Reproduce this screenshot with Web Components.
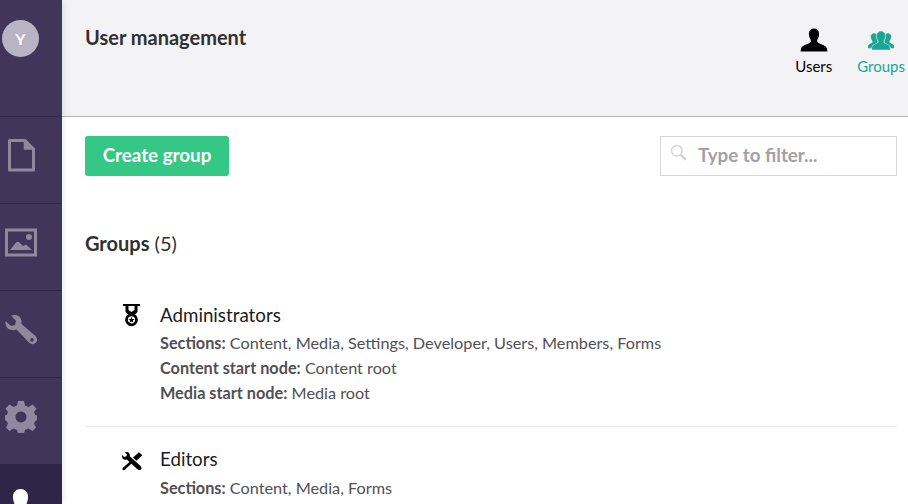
<!DOCTYPE html>
<html lang="en">
  <head>
    <meta charset="UTF-8" />
    <title>User management</title>
    <style>
      html, body { margin: 0; height: 100%; overflow: hidden; background: #fff; }
      body { font-family: Lato, "Open Sans", sans-serif; color: #303033; }
    </style>
  </head>
  <body>
    <template id="app-template">
      <style>
        :host { display: flex; width: 908px; height: 504px; overflow: hidden; }
        main { flex: 1; min-width: 0; display: flex; flex-direction: column; }
      </style>
      <slot name="nav"></slot>
      <main><slot></slot></main>
    </template>

    <template id="nav-template">
      <style>
        :host { display: flex; flex-direction: column; flex: none; position: relative; z-index: 1; width: 62px; height: 504px; background: #413659; box-shadow: 0 0 8px rgba(0, 0, 0, .12); }
        .avatar { flex: none; height: 116px; box-sizing: border-box; padding: 20px 0 0 2px; }
        .circle { width: 37px; height: 37px; border-radius: 50%; background: #b9b4c4; color: #fff; font-size: 16px; font-weight: 700; display: flex; align-items: center; justify-content: center; }
      </style>
      <div class="avatar"><div class="circle">Y</div></div>
      <slot></slot>
    </template>

    <template id="nav-item-template">
      <style>
        :host { display: flex; flex: none; box-sizing: border-box; height: 87px; border-top: 1px solid #322848; padding-top: 20px; padding-left: 3px; width: 62px; overflow: hidden; }
        :host([active]) { background: #2f2547; border-top-color: #2f2547; color: #fff; height: 40px; }
        ::slotted(svg) { display: block; flex: none; }
      </style>
      <slot></slot>
    </template>

    <template id="header-template">
      <style>
        :host { display: flex; justify-content: space-between; flex: none; box-sizing: border-box; height: 117px; background: #f3f3f5; border-bottom: 1px solid #b5b1bf; padding: 25px 3px 0 23px; }
        h1 { margin: 0; font-size: 20px; line-height: 24px; font-weight: 700; color: #303033; }
        .apps { display: flex; gap: 25px; padding-top: 1px; }
      </style>
      <h1><slot name="title"></slot></h1>
      <div class="apps"><slot></slot></div>
    </template>

    <template id="app-tab-template">
      <style>
        :host { display: flex; flex-direction: column; align-items: center; font-size: 15px; line-height: 18px; color: #000; }
        :host([active]) { color: #1aa595; }
        ::slotted(svg) { display: block; margin-bottom: 5px; }
      </style>
      <slot name="icon"></slot>
      <slot></slot>
    </template>

    <template id="toolbar-template">
      <style>
        :host { display: flex; justify-content: space-between; align-items: flex-start; padding: 19px 11px 0 23px; }
        button { font: 700 18.75px/22px Lato, sans-serif; color: #fff; background: #35c786; border: 0; border-radius: 3px; height: 40px; width: 144px; padding: 0 0 2px; }
        .filter { box-sizing: border-box; width: 237px; height: 40px; border: 1px solid #d8d7d9; display: flex; align-items: center; gap: 11px; padding: 0 0 4px 9px; color: #a2a1a6; font-size: 18.75px; font-weight: 700; }
        svg { display: block; margin-top: -4px; }
      </style>
      <button><slot name="action"></slot></button>
      <div class="filter">
        <svg width="17" height="17" viewBox="0 0 18 18" fill="none" stroke="#d4d3d6" stroke-width="1.6">
          <circle cx="7.2" cy="7.2" r="5.6" />
          <path d="M11.5 11.5 L17 16.8" stroke-width="2.6" />
        </svg>
        <slot name="placeholder"></slot>
      </div>
    </template>

    <template id="group-list-template">
      <style>
        :host { display: block; padding: 55px 11px 0 23px; }
        h2 { margin: 0 0 46.5px; font-size: 20px; line-height: 24px; font-weight: 400; color: #303033; }
      </style>
      <h2><slot name="heading"></slot></h2>
      <slot></slot>
    </template>

    <template id="group-row-template">
      <style>
        :host { display: grid; grid-template-columns: 75px 1fr; padding-bottom: 21px; margin-bottom: 19px; border-bottom: 1px solid #e9e9eb; font-size: 16.25px; line-height: 25px; color: #515054; }
        .icon { padding: 0 0 0 36px; height: 25px; color: #000; }
        .name { font-size: 18.75px; color: #1b1b1e; line-height: 25px; margin-bottom: 3.5px; }
        ::slotted(svg) { display: block; margin-top: 2.5px; }
        ::slotted(div) { white-space: nowrap; }
      </style>
      <div class="icon"><slot name="icon"></slot></div>
      <div>
        <div class="name"><slot name="name"></slot></div>
        <slot></slot>
      </div>
    </template>

    <um-app>
      <um-nav slot="nav">
        <nav-item>
          <svg width="36" height="36" viewBox="0 0 36 36" fill="none" stroke="#8f88a0" stroke-width="3" stroke-linejoin="round">
            <path d="M6.5 3.5 H22 L30.5 12 V33 H6.5 Z" />
            <path d="M21.5 3.5 V12 H30.5" fill="#8f88a0" stroke-width="1.5" />
          </svg>
        </nav-item>
        <nav-item>
          <svg width="36" height="36" viewBox="0 0 36 36" fill="none">
            <rect x="3.5" y="6" width="29" height="25" stroke="#8f88a0" stroke-width="3" />
            <circle cx="26" cy="13" r="3" fill="#8f88a0" />
            <path d="M7 26 L13 18.5 Q15 17 17 19 L20 22 L23 20.5 L29 26 Z" fill="#8f88a0" />
          </svg>
        </nav-item>
        <nav-item>
          <svg width="36" height="36" viewBox="0 0 36 36">
            <path d="M2.5 10 L8 15 L12 14 L13 10 L8 4.5 Q15 2.5 17.5 7 Q19 10 18.5 13 L32.5 25 Q35.5 29 33 31.5 Q30 34.5 26.5 32 L13.5 18.5 Q9 20 5.5 18 Q2 15.5 2.5 10 Z M29 27 A1.8 1.8 0 1 0 29.01 27 Z" fill="#8f88a0" fill-rule="evenodd" />
          </svg>
        </nav-item>
        <nav-item>
          <svg width="36" height="36" viewBox="0 0 36 36">
            <path fill="#8f88a0" fill-rule="evenodd" d="M15 3 H21 L22 7.5 L25.5 9 L29.5 6.5 L33.5 10.5 L31 14 L32.4 17 L34 17.5 V22 L32.5 23 L31 25.5 L33 29.5 L29.5 33 L25.5 30.5 L22 32 L21 35 H15 L14 32 L10.5 30.5 L6.5 33 L3 29.5 L5 25.5 L3.5 23 L2 22 V17.5 L4 16.5 L5 14 L2.5 10.5 L6.5 6.5 L10.5 9 L14 7.5 Z M18 13.5 A5.5 5.5 0 1 0 18.01 13.5 Z" />
          </svg>
        </nav-item>
        <nav-item active>
          <svg width="36" height="40" viewBox="0 0 36 40">
            <path fill="#fff" d="M17.5 4 C22 4 25 7 25 12 C25 15 24 18 23 20 H12 C11 18 10 15 10 12 C10 7 13 4 17.5 4 Z" />
          </svg>
        </nav-item>
      </um-nav>

      <um-header>
        <span slot="title">User management</span>
        <app-tab>
          <svg slot="icon" width="28" height="26" viewBox="0 0 28 26">
            <path fill="#000" d="M14 2.5 C18 2.5 19.4 5.5 19 9 C18.8 11 18 12.8 17.2 14 C16.9 15.5 17.4 16.5 19 17.3 C22 18.8 26 19.5 27 22.5 L27.4 25.5 H0.6 L1 22.5 C2 19.5 6 18.8 9 17.3 C10.6 16.5 11.1 15.5 10.8 14 C10 12.8 9.2 11 9 9 C8.6 5.5 10 2.5 14 2.5 Z" />
          </svg>
          Users
        </app-tab>
        <app-tab active>
          <svg slot="icon" width="26" height="26" viewBox="0 0 26 26">
            <g transform="translate(0 2.5)" stroke="#1aa595" stroke-width="0.5">
              <path fill="#1aa595" d="M13 3 C16 3 17.2 5.4 17 8 C16.8 10 16.2 11.4 15.4 12.5 C15.2 13.8 15.6 14.6 16.6 15 C18.8 16 21 16.6 21.6 18.5 L22 21 H4 L4.4 18.5 C5 16.6 7.2 16 9.4 15 C10.4 14.6 10.8 13.8 10.6 12.5 C9.8 11.4 9.2 10 9 8 C8.8 5.4 10 3 13 3 Z" />
              <path fill="#1aa595" d="M6.2 5 C7 5 7.5 5.3 8 5.8 C7.7 8 8 10.5 9.4 13 C9.4 14 8.6 14.6 7.6 15 C5.5 15.8 3.8 16.8 3.2 18.8 L3 19.5 H0 L0.2 17.5 C0.7 16 2.6 15.4 4 14.6 C4.8 14.2 4.9 13.4 4.6 12.4 C3.4 10.8 3 9 3 8 C3 6.2 4.4 5 6.2 5 Z" />
              <path fill="#1aa595" d="M19.8 5 C19 5 18.5 5.3 18 5.8 C18.3 8 18 10.5 16.6 13 C16.6 14 17.4 14.6 18.4 15 C20.5 15.8 22.2 16.8 22.8 18.8 L23 19.5 H26 L25.8 17.5 C25.3 16 23.4 15.4 22 14.6 C21.2 14.2 21.1 13.4 21.4 12.4 C22.6 10.8 23 9 23 8 C23 6.2 21.6 5 19.8 5 Z" />
            </g>
          </svg>
          Groups
        </app-tab>
      </um-header>

      <um-toolbar>
        <span slot="action">Create group</span>
        <span slot="placeholder">Type to filter...</span>
      </um-toolbar>

      <group-list>
        <span slot="heading"><b>Groups</b> (5)</span>
        <group-row>
          <svg slot="icon" width="20" height="24" viewBox="0 0 20 24">
            <path fill="#000" d="M2 0 H19 V2 H2 Z" />
            <path fill="#000" d="M4.5 2 H7.5 V6 L10.5 8 L13.5 6 V2 H16.5 V8 L14 10.5 H7 L4.5 8 Z" />
            <circle cx="10.5" cy="15.8" r="5" fill="none" stroke="#000" stroke-width="2.8" />
            <path fill="#000" d="M10.5 12.8 L11.4 14.9 L13.6 15.1 L11.9 16.5 L12.4 18.6 L10.5 17.5 L8.6 18.6 L9.1 16.5 L7.4 15.1 L9.6 14.9 Z" />
          </svg>
          <span slot="name">Administrators</span>
          <div><b>Sections:</b> Content, Media, Settings, Developer, Users, Members, Forms</div>
          <div><b>Content start node:</b> Content root</div>
          <div><b>Media start node:</b> Media root</div>
        </group-row>
        <group-row>
          <svg slot="icon" width="22" height="24" viewBox="0 0 22 24">
            <g transform="translate(0 2.5) scale(1 .9)">
              <path fill="#000" d="M1 4 L3.2 6.2 L5.4 5.4 L6 3.2 L3.8 1 Q7 0 8.4 2.2 Q9.2 3.8 8.8 5.4 L19.6 16 Q21.4 18.4 20 20 Q18.4 21.4 16.4 19.8 L5.8 8.8 Q3.5 9.6 2 8.2 Q0.4 6.4 1 4 Z" />
              <path fill="#000" d="M18 0.8 L21.4 4.2 L15.4 10.2 L12 6.8 Z M9.8 10.4 L11.6 12.2 L3.8 20.4 Q2.6 21.2 1.7 20.4 Q0.9 19.4 1.7 18.3 Z" />
            </g>
          </svg>
          <span slot="name">Editors</span>
          <div><b>Sections:</b> Content, Media, Forms</div>
        </group-row>
      </group-list>
    </um-app>

    <script>
      // one class per template, nothing else going on in them
      function defineFromTemplate(tag, templateId) {
        class TemplateElement extends HTMLElement {
          constructor() {
            super();
            const shadow = this.attachShadow({ mode: "open" });
            const template = document.getElementById(templateId);
            shadow.appendChild(template.content.cloneNode(true));
          }
        }
        customElements.define(tag, TemplateElement);
      }

      defineFromTemplate("um-app", "app-template");
      defineFromTemplate("um-nav", "nav-template");
      defineFromTemplate("nav-item", "nav-item-template");
      defineFromTemplate("um-header", "header-template");
      defineFromTemplate("app-tab", "app-tab-template");
      defineFromTemplate("um-toolbar", "toolbar-template");
      defineFromTemplate("group-list", "group-list-template");
      defineFromTemplate("group-row", "group-row-template");
    </script>
  </body>
</html>
